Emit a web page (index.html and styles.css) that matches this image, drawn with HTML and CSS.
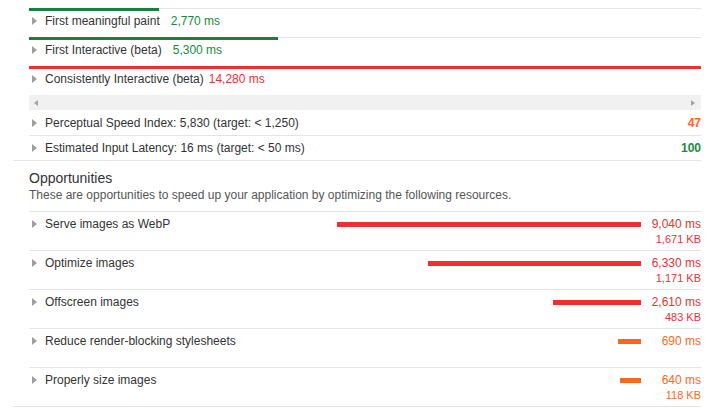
FILE: index.html
```html
<!DOCTYPE html>
<html>
<head>
<meta charset="utf-8">
<link rel="stylesheet" href="styles.css">
</head>
<body>
<div class="report">
  <section class="perf">
    <div class="metrics">
      <div class="metric">
        <span class="bar pass" style="width:130px"></span>
        <span class="arrow"></span><span class="label">First meaningful paint</span><span class="mval pass-text">2,770 ms</span>
      </div>
      <div class="metric">
        <span class="bar pass" style="width:249px"></span>
        <span class="arrow"></span><span class="label">First Interactive (beta)</span><span class="mval pass-text">5,300 ms</span>
      </div>
      <div class="metric">
        <span class="bar fail" style="width:100%"></span>
        <span class="arrow"></span><span class="label">Consistently Interactive (beta)</span><span class="mval fail-text tight">14,280 ms</span>
      </div>
      <div class="scrollbar"><span class="sb-left"></span><span class="sb-right"></span></div>
      <div class="audit first">
        <span class="arrow"></span><span class="label grow">Perceptual Speed Index: 5,830 (target: &lt; 1,250)</span><span class="score avg-text">47</span>
      </div>
      <div class="audit">
        <span class="arrow"></span><span class="label grow">Estimated Input Latency: 16 ms (target: &lt; 50 ms)</span><span class="score pass-text">100</span>
      </div>
    </div>
  </section>
  <section class="opps">
    <h2 class="opps-title">Opportunities</h2>
    <p class="opps-desc">These are opportunities to speed up your application by optimizing the following resources.</p>
    <div class="opp">
      <span class="arrow"></span><span class="label grow">Serve images as WebP</span>
      <span class="opp-bar fail" style="width:304px"></span>
      <span class="opp-vals fail-text"><span class="ms">9,040 ms</span><span class="kb">1,671 KB</span></span>
    </div>
    <div class="opp">
      <span class="arrow"></span><span class="label grow">Optimize images</span>
      <span class="opp-bar fail" style="width:213px"></span>
      <span class="opp-vals fail-text"><span class="ms">6,330 ms</span><span class="kb">1,171 KB</span></span>
    </div>
    <div class="opp">
      <span class="arrow"></span><span class="label grow">Offscreen images</span>
      <span class="opp-bar fail" style="width:88px"></span>
      <span class="opp-vals fail-text"><span class="ms">2,610 ms</span><span class="kb">483 KB</span></span>
    </div>
    <div class="opp">
      <span class="arrow"></span><span class="label grow">Reduce render-blocking stylesheets</span>
      <span class="opp-bar avg" style="width:23px"></span>
      <span class="opp-vals avg-text"><span class="ms">690 ms</span></span>
    </div>
    <div class="opp">
      <span class="arrow"></span><span class="label grow">Properly size images</span>
      <span class="opp-bar avg" style="width:21px"></span>
      <span class="opp-vals avg-text"><span class="ms">640 ms</span><span class="kb">118 KB</span></span>
    </div>
  </section>
</div>
</body>
</html>
```
FILE: styles.css
```css
html, body {
  margin: 0;
  padding: 0;
  background: #ffffff;
}
body {
  font-family: "Liberation Sans", Arial, sans-serif;
  font-size: 12px;
  color: #333333;
}
.report {
  width: 688px;
  margin-left: 13px;
  padding-top: 8px;
}
.perf {
  border-bottom: 1px solid #e4e4e4;
}
.metrics {
  margin-left: 16px;
}
.metric {
  position: relative;
  display: flex;
  align-items: center;
  border-top: 1px solid #e4e4e4;
  padding: 4px 0 8px 0;
  line-height: 16px;
}
.bar {
  position: absolute;
  left: 0;
  top: -1px;
  height: 3px;
}
.pass { background: #1a7f3c; }
.fail { background: #ee3033; }
.avg { background: #fd671c; }
.pass-text { color: #188a3c; }
.fail-text { color: #ee3033; }
.avg-text { color: #fd671c; }
.arrow {
  width: 0;
  height: 0;
  margin-left: 3px;
  margin-right: 8px;
  border-left: 5px solid #9e9e9e;
  border-top: 4px solid transparent;
  border-bottom: 4px solid transparent;
  flex: none;
}
.label {
  white-space: nowrap;
}
.grow {
  flex: 1;
}
.mval {
  margin-left: 11px;
}
.mval.tight {
  margin-left: 5px;
}
.scrollbar {
  display: flex;
  justify-content: space-between;
  align-items: center;
  height: 15px;
  background: #f1f1f1;
  padding: 0 6px 0 5px;
}
.sb-left, .sb-right {
  width: 0;
  height: 0;
  border-top: 3.5px solid transparent;
  border-bottom: 3.5px solid transparent;
}
.sb-left { border-right: 4px solid #a3a3a3; }
.sb-right { border-left: 4px solid #a3a3a3; }
.audit {
  display: flex;
  align-items: center;
  line-height: 16px;
  padding: 4px 0 4px 0;
}
.audit.first {
  padding-top: 5px;
  border-bottom: 1px solid #e4e4e4;
}
.score {
  font-weight: bold;
}
.opps {
  border-bottom: 1px solid #e4e4e4;
}
.opps-title {
  margin: 0 0 0 16px;
  padding-top: 8px;
  font-size: 14px;
  font-weight: normal;
  line-height: 18px;
  color: #333333;
}
.opps-desc {
  margin: 0 0 0 16px;
  line-height: 16px;
  padding-bottom: 8px;
  color: #555555;
}
.opp {
  display: flex;
  align-items: flex-start;
  margin-left: 16px;
  border-top: 1px solid #e4e4e4;
  height: 34px;
  padding-top: 4px;
  box-sizing: content-box;
  line-height: 16px;
}
.opp .arrow {
  margin-top: 4px;
}
.opp-bar {
  height: 5px;
  margin-top: 6px;
  flex: none;
}
.opp-vals {
  width: 60px;
  flex: none;
  display: flex;
  flex-direction: column;
  align-items: flex-end;
}
.ms {
  line-height: 16px;
}
.kb {
  font-size: 11px;
  line-height: 14px;
}
```
